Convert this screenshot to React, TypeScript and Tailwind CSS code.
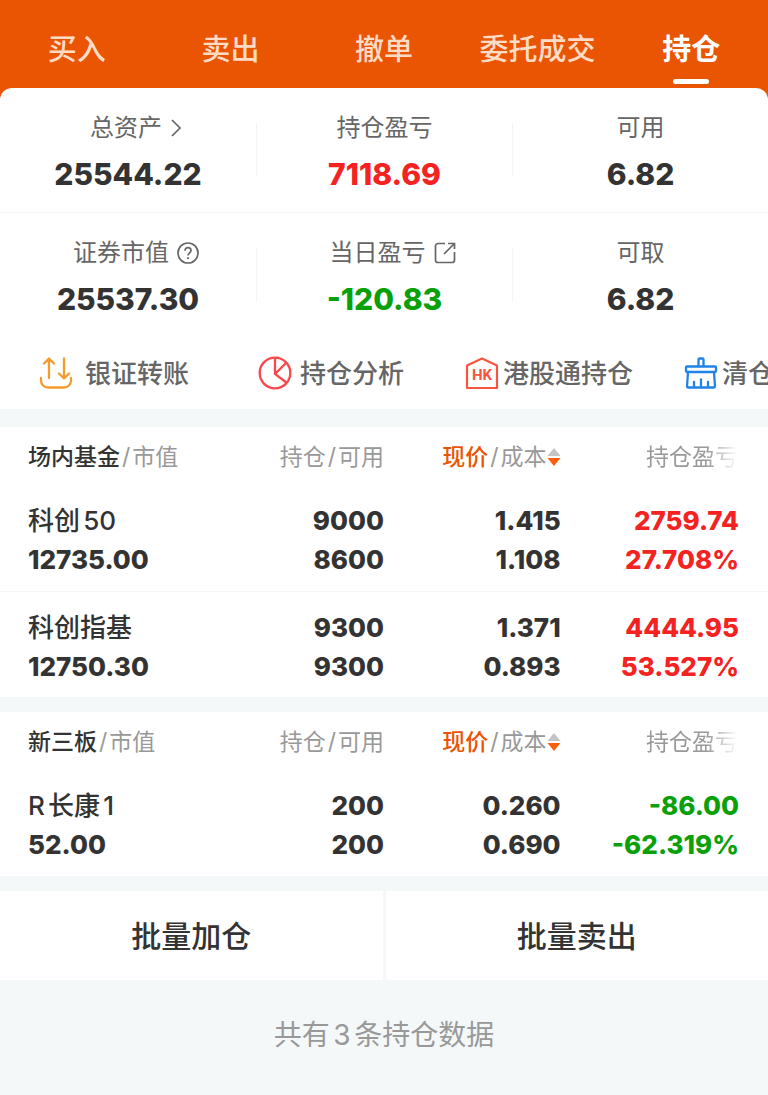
import { FC, ReactNode } from "react";
import clsx from "clsx";

type Tone = "up" | "down" | "plain";

const toneClass: Record<Tone, string> = {
    up: "text-[#f52222]",
    down: "text-[#0aa00a]",
    plain: "text-[#333]",
};

const tabs = ["买入", "卖出", "撤单", "委托成交", "持仓"];

interface HoldingRow {
    name: string;
    marketValue: string;
    amount: string;
    available: string;
    price: string;
    cost: string;
    profit: string;
    percent: string;
    tone: Tone;
}

const funds: HoldingRow[] = [
    { name: "科创50", marketValue: "12735.00", amount: "9000", available: "8600", price: "1.415", cost: "1.108", profit: "2759.74", percent: "27.708%", tone: "up" },
    { name: "科创指基", marketValue: "12750.30", amount: "9300", available: "9300", price: "1.371", cost: "0.893", profit: "4444.95", percent: "53.527%", tone: "up" },
];

const neeq: HoldingRow[] = [
    { name: "R长康1", marketValue: "52.00", amount: "200", available: "200", price: "0.260", cost: "0.690", profit: "-86.00", percent: "-62.319%", tone: "down" },
];

const ChevronIcon = () => (
    <svg viewBox="0 0 12 22" className="h-[22px] w-3" fill="none" stroke="#666" strokeWidth="1.7">
        <path d="M2 3l8 8-8 8" />
    </svg>
);

const HelpIcon = () => (
    <svg viewBox="0 0 22 22" className="size-[22px]" fill="none" stroke="#666" strokeWidth="1.7">
        <circle cx="11" cy="11" r="10" />
        <path d="M8 8.7c0-1.9 1.3-3 3-3s3 1.1 3 2.8c0 2.2-3 2.4-3 5" />
        <path d="M11 15.2v1.8" strokeWidth="1.9" />
    </svg>
);

const ExportIcon = () => (
    <svg viewBox="0 0 22 22" className="size-[22px]" fill="none" stroke="#666" strokeWidth="1.7">
        <path d="M11 1.5H4A2.5 2.5 0 0 0 1.5 4v14A2.5 2.5 0 0 0 4 20.5h14a2.5 2.5 0 0 0 2.5-2.5V10" />
        <path d="M10 12L20 2M14 1.5h6.500V7" />
    </svg>
);

const TransferIcon = () => (
    <svg viewBox="0 0 34 34" className="size-[34px]" fill="none" stroke="#f29b2e" strokeWidth="2.3" strokeLinecap="round" strokeLinejoin="round">
        <path d="M10 22V3M5 7.500L10 2.500l5 5M25 2.500v19.500M20 17.500l5 5 5-5" />
        <path d="M2 22v2.500a7 7 0 0 0 7 7h16a7 7 0 0 0 7-7V22" />
    </svg>
);

const PieIcon = () => (
    <svg viewBox="0 0 34 34" className="size-[34px]" fill="none" stroke="#f9474b" strokeWidth="2.3">
        <circle cx="17" cy="17" r="15.3" />
        <path d="M17 2v16l12 9M17 18L28.500 6.500" />
    </svg>
);

const HkIcon = () => (
    <svg viewBox="0 0 34 34" className="size-[34px]">
        <path d="M2 32V9.500L17 2.500l15 7V32z" fill="none" stroke="#f7553f" strokeWidth="2.2" strokeLinejoin="round" />
        <text x="17" y="24" textAnchor="middle" fill="#f7553f" className="font-[Roboto] text-[15px] font-bold">HK</text>
    </svg>
);

const BrushIcon = () => (
    <svg viewBox="0 0 34 34" className="size-[34px]" fill="none" stroke="#2183e8" strokeWidth="2.3" strokeLinejoin="round" strokeLinecap="round">
        <path d="M14.500 10V3.500a1 1 0 0 1 1-1h3a1 1 0 0 1 1 1V10" />
        <rect x="2" y="10.5" width="30" height="5.5" rx="1" />
        <path d="M4 16L3 30.500a1 1 0 0 0 1 1h26a1 1 0 0 0 1-1L30 16M10 26v5M17 23.500V31M24 26v5" />
    </svg>
);

interface SummaryCellProps {
    label: string;
    value: string;
    tone?: Tone;
    icon?: ReactNode;
    divided?: boolean;
}

const SummaryCell: FC<SummaryCellProps> = ({ label, value, tone = "plain", icon, divided }) => (
    <div className="flex items-center">
        {divided && <span className="h-[54px] w-px bg-[#f3f5f6]" />}
        <dl className="flex flex-1 flex-col items-center gap-3 pt-6 pb-5">
            <dt className={clsx("flex h-8 items-center gap-2 text-2xl text-[#666]", icon && "pl-4")}>
                {label}
                {icon}
            </dt>
            <dd className={clsx("text-[30px] leading-9 font-extrabold", toneClass[tone])}>{value}</dd>
        </dl>
    </div>
);

const SortIcon = () => (
    <svg viewBox="0 0 14 20" className="h-5 w-[14px]">
        <path d="M7 1l6.500 8H.5z" fill="#c4c4c4" />
        <path d="M7 19l6.500-8H.5z" fill="#fb5f0c" />
    </svg>
);

const Slash = () => <span className="px-0.5">/</span>;

const HoldingTable: FC<{ title: string; rows: HoldingRow[] }> = ({ title, rows }) => (
    <table className="w-full table-fixed bg-white text-right">
        <thead>
            <tr className="h-[58px] text-[23px] text-[#999]">
                <th className="w-[30%] pt-0.5 pl-7 text-left font-normal whitespace-nowrap">
                    <span className="font-medium text-[#333]">{title}</span><Slash />市值
                </th>
                <th className="w-[20%] pt-0.5 font-normal whitespace-nowrap">持仓<Slash />可用</th>
                <th className="w-[23%] pt-0.5 font-normal whitespace-nowrap">
                    <button type="button" className="inline-flex items-center">
                        <span className="font-medium text-[#ea5504]">现价</span><Slash />成本
                        <SortIcon />
                    </button>
                </th>
                <th className="pt-0.5 pr-[30px] font-normal whitespace-nowrap">
                    <span className="[mask-image:linear-gradient(to_right,#000_65%,transparent)]">持仓盈亏</span>
                </th>
            </tr>
        </thead>
        <tbody className="text-[26px] leading-[39px] font-extrabold text-[#333]">
            {rows.map((row) => (
                <tr key={row.name} className="h-[106px] border-b border-[#f4f6f7] align-top last:border-b-0">
                    <td className="pt-4 pl-7 text-left">
                        <div className="font-medium [text-autospace:normal]">{row.name}</div>
                        <div>{row.marketValue}</div>
                    </td>
                    <td className="pt-4">
                        <div>{row.amount}</div>
                        <div>{row.available}</div>
                    </td>
                    <td className="pt-4">
                        <div>{row.price}</div>
                        <div>{row.cost}</div>
                    </td>
                    <td className={clsx("pt-4 pr-[29px]", toneClass[row.tone])}>
                        <div>{row.profit}</div>
                        <div>{row.percent}</div>
                    </td>
                </tr>
            ))}
        </tbody>
    </table>
);

const App = () => {
    return (
        <div className="min-h-screen overflow-hidden bg-[#f4f8f9] font-['Inter','Noto_Sans_CJK_SC',sans-serif]">
            <div className="bg-[#ea5504]">
                <nav className="grid h-[88px] grid-cols-5">
                    {tabs.map((tab) => {
                        const active = tab === "持仓";
                        return (
                            <button
                                key={tab}
                                type="button"
                                className={clsx(
                                    "flex flex-col items-center justify-end gap-1.5 pb-1 text-[29px] leading-[46px] whitespace-nowrap",
                                    active ? "font-bold text-white" : "font-medium text-[#ffdcc6]"
                                )}
                            >
                                {tab}
                                <span className={clsx("h-[5px] w-9 rounded-full", active && "bg-white")} />
                            </button>
                        );
                    })}
                </nav>
                <section className="rounded-t-xl bg-white">
                    <div className="grid grid-cols-3">
                        <SummaryCell label="总资产" value="25544.22" icon={<ChevronIcon />} />
                        <SummaryCell label="持仓盈亏" value="7118.69" tone="up" divided />
                        <SummaryCell label="可用" value="6.82" divided />
                    </div>
                    <div className="grid grid-cols-3 border-t border-[#f4f6f7]">
                        <SummaryCell label="证券市值" value="25537.30" icon={<HelpIcon />} />
                        <SummaryCell label="当日盈亏" value="-120.83" tone="down" icon={<ExportIcon />} divided />
                        <SummaryCell label="可取" value="6.82" divided />
                    </div>
                    <div className="flex h-[72px] overflow-hidden pl-[39px] text-[26px] font-medium whitespace-nowrap text-[#666]">
                        <button type="button" className="flex w-[219px] shrink-0 items-center gap-3">
                            <TransferIcon />银证转账
                        </button>
                        <button type="button" className="flex w-[207px] shrink-0 items-center gap-2">
                            <PieIcon />持仓分析
                        </button>
                        <button type="button" className="flex w-[219px] shrink-0 items-center gap-1">
                            <HkIcon />港股通持仓
                        </button>
                        <button type="button" className="flex shrink-0 items-center gap-1">
                            <BrushIcon />清仓
                        </button>
                    </div>
                </section>
            </div>

            <main className="flex flex-col gap-[15px] pt-[18px]">
                <HoldingTable title="场内基金" rows={funds} />
                <HoldingTable title="新三板" rows={neeq} />
                <div className="grid grid-cols-2 gap-[3px] text-[30px] font-medium text-[#333]">
                    <button type="button" className="h-[89px] bg-white pt-0.5">批量加仓</button>
                    <button type="button" className="h-[89px] bg-white pt-0.5">批量卖出</button>
                </div>
            </main>
            <p className="py-8 text-center text-[28px] leading-[46px] text-[#999] [text-autospace:normal]">共有3条持仓数据</p>
        </div>
    );
};

export default App;
